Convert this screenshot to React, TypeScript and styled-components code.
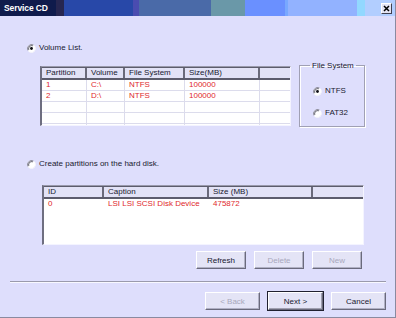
import React from "react";
import styled, { createGlobalStyle } from "styled-components";

const Global = createGlobalStyle`
  html, body { margin: 0; padding: 0; background: #dedefc; }
  body { font-family: "Liberation Sans", Arial, sans-serif; font-size: 8px; }
`;

const Window = styled.div`
  width: 396px;
  height: 318px;
  box-sizing: border-box;
  background: #dedefc;
  border-right: 1px solid #8a8aa0;
  border-bottom: 1px solid #8a8aa0;
  display: flex;
  flex-direction: column;
  color: #1a1a2a;
`;

const TitleBar = styled.div`
  height: 16px;
  flex: none;
  display: flex;
  align-items: center;
  justify-content: space-between;
  padding: 0 3px 0 4px;
  background: linear-gradient(
    to right,
    #0f1b4c 0px, #0f1b4c 56px,
    #262650 56px, #262650 64px,
    #2848a8 64px, #2848a8 133px,
    #4a4cb0 133px, #4a4cb0 139px,
    #4a6aa8 139px, #4a6aa8 211px,
    #6a98a8 211px, #6a98a8 245px,
    #6a90ff 245px, #6a90ff 285px,
    #78a8ff 285px, #78a8ff 288px,
    #92b2ff 288px, #92b2ff 357px,
    #92d8ff 357px, #92d8ff 365px,
    #b2ceff 365px
  );
`;

const Title = styled.span`
  color: #ffffff;
  font-weight: bold;
  font-size: 8.5px;
  letter-spacing: -0.1px;
`;

const CloseBox = styled.div`
  width: 11px;
  height: 11px;
  box-sizing: border-box;
  background: #e4e4f4;
  border-top: 1px solid #ffffff;
  border-left: 1px solid #ffffff;
  border-right: 1px solid #404050;
  border-bottom: 1px solid #404050;
  display: flex;
  align-items: center;
  justify-content: center;
`;

const Body = styled.div`
  flex: 1;
  display: flex;
  flex-direction: column;
  padding: 27px 9px 0 27px;
`;

const OptionRow = styled.label<{ $top?: number; $left?: number }>`
  display: flex;
  align-items: center;
  gap: 3px;
  height: 10px;
  margin-top: ${(p) => p.$top ?? 0}px;
  margin-left: ${(p) => p.$left ?? 0}px;
`;

const RadioText = styled.span`
  font-size: 8px;
  line-height: 10px;
  white-space: nowrap;
  color: #202030;
`;

const RadioIcon = ({ checked }: { checked?: boolean }) => (
  <svg width="9" height="9" viewBox="0 0 12 12">
    <circle cx="6" cy="6" r="5.5" fill="#ffffff" />
    <path d="M1.2 8.5 A5.5 5.5 0 0 1 8.5 1.2" stroke="#808090" strokeWidth="1.2" fill="none" />
    <path d="M2.4 7.8 A4.2 4.2 0 0 1 7.8 2.4" stroke="#303040" strokeWidth="1" fill="none" />
    <path d="M3.5 10.8 A5.5 5.5 0 0 0 10.8 3.5" stroke="#f0f0f8" strokeWidth="1.2" fill="none" />
    {checked && <circle cx="6" cy="6" r="1.9" fill="#101018" />}
  </svg>
);

const TopSection = styled.div`
  display: flex;
  align-items: flex-start;
  gap: 8px;
  margin: 13px 0 0 13px;
`;

const Table = styled.div<{ $w: number; $h: number }>`
  width: ${(p) => p.$w}px;
  height: ${(p) => p.$h}px;
  box-sizing: border-box;
  background: #ffffff;
  border-left: 2px solid #6e6e80;
  border-top: 1px solid #9a9aac;
  border-right: 1px solid #f4f4ff;
  border-bottom: 1px solid #f4f4ff;
  overflow: hidden;
  display: flex;
  flex-direction: column;
`;

const HeaderRow = styled.div<{ $cols: string }>`
  display: grid;
  grid-template-columns: ${(p) => p.$cols};
  height: 13px;
  box-sizing: border-box;
  background: #e2e2f6;
  border-top: 1px solid #5c5c6c;
  border-bottom: 2px solid #5c5c6c;
  flex: none;
`;

const HeaderCell = styled.div`
  font-size: 8px;
  line-height: 10px;
  padding-left: 4px;
  color: #202030;
  border-right: 2px solid #6a6a7a;
  white-space: nowrap;
  overflow: hidden;
  &:last-child { border-right: none; }
`;

const DataRow = styled.div<{ $cols: string; $grid?: boolean }>`
  display: grid;
  grid-template-columns: ${(p) => p.$cols};
  height: 11px;
  box-sizing: border-box;
  flex: none;
  border-bottom: ${(p) => (p.$grid ? "1px solid #dcdcec" : "none")};
`;

const DataCell = styled.div<{ $grid?: boolean }>`
  color: #e0282c;
  font-size: 8px;
  line-height: 10px;
  padding-left: 4px;
  white-space: nowrap;
  overflow: hidden;
  border-right: ${(p) => (p.$grid ? "1px solid #dcdcec" : "none")};
  &:last-child { border-right: none; }
`;

const GroupBox = styled.fieldset`
  margin: -5px 0 0 0;
  width: 66px;
  height: 66px;
  box-sizing: border-box;
  padding: 0;
  border: 1px solid #a0a0b4;
  box-shadow: inset 1px 1px 0 #ffffff, 1px 1px 0 #ffffff;
  display: flex;
  flex-direction: column;
  gap: 12px;
`;

const Legend = styled.legend`
  font-size: 8px;
  padding: 0 2px;
  margin-left: 10px;
  line-height: 9px;
  white-space: nowrap;
  color: #202030;
`;

const SecondTable = styled.div`
  margin: 16px 0 0 15px;
`;

const ButtonRow = styled.div<{ $top: number; $gap: number; $right: number }>`
  display: flex;
  justify-content: flex-end;
  gap: ${(p) => p.$gap}px;
  margin-top: ${(p) => p.$top}px;
  margin-right: ${(p) => p.$right}px;
`;

const Button = styled.button<{ $w: number; $default?: boolean }>`
  width: ${(p) => p.$w}px;
  height: 18px;
  box-sizing: border-box;
  padding: 0;
  font-family: "Liberation Sans", Arial, sans-serif;
  font-size: 8px;
  color: ${(p) => (p.disabled ? "#a8a8bc" : "#202030")};
  background: #e4e4f6;
  border: 1px solid;
  border-color: #ffffff #6a6a7c #6a6a7c #ffffff;
  box-shadow: ${(p) =>
    p.$default ? "0 0 0 1px #202030, inset -1px -1px 0 #a0a0b0" : "inset -1px -1px 0 #b0b0c4"};
  ${(p) => (p.$default ? "margin: 0 1px;" : "")}
`;

const Separator = styled.div`
  height: 0;
  border-top: 1px solid #9a9aac;
  border-bottom: 1px solid #f8f8ff;
  margin: 12px 0 0 -17px;
`;

const cols1 = "45px 38px 60px 75px 1fr";
const cols2 = "60px 105px 104px 1fr";

export default function App() {
  return (
    <>
      <Global />
      <Window>
        <TitleBar>
          <Title>Service CD</Title>
          <CloseBox>
            <svg width="7" height="7" viewBox="0 0 7 7">
              <path d="M1 1 L6 6 M6 1 L1 6" stroke="#000" strokeWidth="1.5" />
            </svg>
          </CloseBox>
        </TitleBar>
        <Body>
          <OptionRow>
            <RadioIcon checked />
            <RadioText>Volume List.</RadioText>
          </OptionRow>
          <TopSection>
            <Table $w={251} $h={60}>
              <HeaderRow $cols={cols1}>
                <HeaderCell>Partition</HeaderCell>
                <HeaderCell>Volume</HeaderCell>
                <HeaderCell>File System</HeaderCell>
                <HeaderCell>Size(MB)</HeaderCell>
                <HeaderCell />
              </HeaderRow>
              {[
                ["1", "C:\\", "NTFS", "100000"],
                ["2", "D:\\", "NTFS", "100000"],
                ["", "", "", ""],
                ["", "", "", ""],
                ["", "", "", ""],
              ].map((r, i) => (
                <DataRow key={i} $cols={cols1} $grid>
                  {r.map((c, j) => (
                    <DataCell key={j} $grid>
                      {c}
                    </DataCell>
                  ))}
                  <DataCell $grid />
                </DataRow>
              ))}
            </Table>
            <GroupBox>
              <Legend>File System</Legend>
              <OptionRow $top={16} $left={13}>
                <RadioIcon checked />
                <RadioText>NTFS</RadioText>
              </OptionRow>
              <OptionRow $left={13}>
                <RadioIcon />
                <RadioText>FAT32</RadioText>
              </OptionRow>
            </GroupBox>
          </TopSection>
          <OptionRow $top={32}>
            <RadioIcon />
            <RadioText>Create partitions on the hard disk.</RadioText>
          </OptionRow>
          <SecondTable>
            <Table $w={322} $h={60}>
              <HeaderRow $cols={cols2}>
                <HeaderCell>ID</HeaderCell>
                <HeaderCell>Caption</HeaderCell>
                <HeaderCell>Size (MB)</HeaderCell>
                <HeaderCell />
              </HeaderRow>
              <DataRow $cols={cols2}>
                <DataCell>0</DataCell>
                <DataCell>LSI LSI SCSI Disk Device</DataCell>
                <DataCell>475872</DataCell>
                <DataCell />
              </DataRow>
            </Table>
          </SecondTable>
          <ButtonRow $top={6} $gap={8} $right={24}>
            <Button $w={50}>Refresh</Button>
            <Button $w={50} disabled>Delete</Button>
            <Button $w={50} disabled>New</Button>
          </ButtonRow>
          <Separator />
          <ButtonRow $top={9} $gap={7} $right={0}>
            <Button $w={55} disabled>&lt; Back</Button>
            <Button $w={55} $default>Next &gt;</Button>
            <Button $w={55}>Cancel</Button>
          </ButtonRow>
        </Body>
      </Window>
    </>
  );
}
